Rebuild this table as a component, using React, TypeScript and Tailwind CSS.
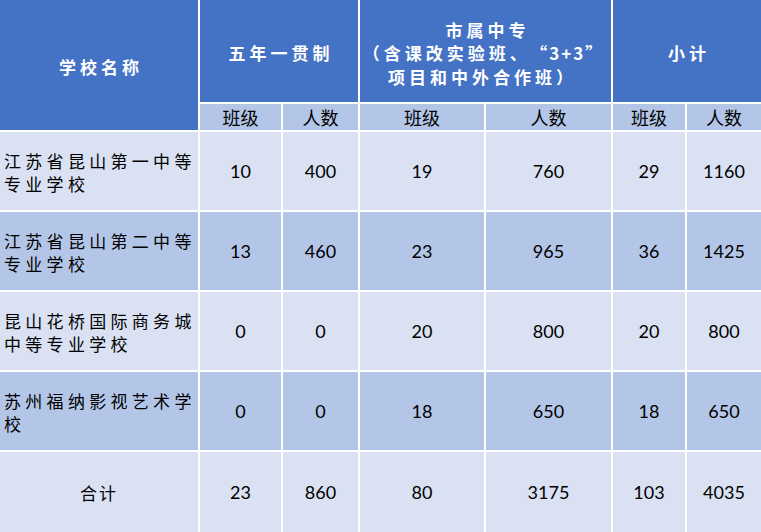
import React from "react";

const rows = [
  { name: ["江苏省昆山第一中等", "专业学校"], cells: ["10", "400", "19", "760", "29", "1160"], dark: false },
  { name: ["江苏省昆山第二中等", "专业学校"], cells: ["13", "460", "23", "965", "36", "1425"], dark: true },
  { name: ["昆山花桥国际商务城", "中等专业学校"], cells: ["0", "0", "20", "800", "20", "800"], dark: false },
  { name: ["苏州福纳影视艺术学", "校"], cells: ["0", "0", "18", "650", "18", "650"], dark: true },
];

const cjk = { fontFamily: '"Noto Sans CJK SC", "Noto Sans", sans-serif' };
const num = { fontFamily: 'Lato, "Noto Sans CJK SC", sans-serif' };

export default function App() {
  return (
    <div className="w-[761px] h-[532px] bg-white">
      <div
        className="grid gap-[2px] bg-white grid-cols-[198px_81px_75px_124px_125px_72px_74px] grid-rows-[102px_26px_78px_78px_78px_78px_80px] text-black"
        style={cjk}
      >
        {/* header */}
        <div className="row-span-2 bg-[#4472c4] flex items-center justify-center text-white font-bold text-[17px] tracking-[4px] pl-[4px] pt-[4px]">
          学校名称
        </div>
        <div className="col-span-2 bg-[#4472c4] flex items-center justify-center text-white font-bold text-[17px] tracking-[4px] pl-[4px] pt-[4px]">
          五年一贯制
        </div>
        <div className="col-span-2 bg-[#4472c4] flex flex-col items-center justify-center text-white font-bold text-[17px] tracking-[4px] leading-[23.5px] text-center pt-[4px]">
          <span className="pl-[4px]">市属中专</span>
          <span className="-ml-[4px]">
            （含课改实验班、
            <span className="tracking-[2px] ml-[8px]">“3+3”</span>
          </span>
          <span className="-ml-[6px]">项目和中外合作班）</span>
        </div>
        <div className="col-span-2 bg-[#4472c4] flex items-center justify-center text-white font-bold text-[17px] tracking-[4px] pl-[4px] pt-[4px]">
          小计
        </div>

        {/* sub header */}
        {["班级", "人数", "班级", "人数", "班级", "人数"].map((t, i) => (
          <div key={i} className="bg-[#b4c6e7] flex items-center justify-center text-[18px] leading-none">
            {t}
          </div>
        ))}

        {/* body */}
        {rows.map((r, i) => {
          const bg = r.dark ? "bg-[#b4c6e7]" : "bg-[#d9e1f2]";
          return (
            <React.Fragment key={i}>
              <div className={`${bg} flex flex-col justify-center pl-[4px] pt-[2px] text-[17px] tracking-[4.3px] leading-[23px]`}>
                <span>{r.name[0]}</span>
                <span>{r.name[1]}</span>
              </div>
              {r.cells.map((c, j) => (
                <div key={j} className={`${bg} flex items-center justify-center text-[18px] pt-[1px]`} style={num}>
                  {c}
                </div>
              ))}
            </React.Fragment>
          );
        })}

        {/* total */}
        <div className="bg-[#d9e1f2] flex items-center justify-center text-[17px] tracking-[2px] pt-[1px]">合计</div>
        {["23", "860", "80", "3175", "103", "4035"].map((c, j) => (
          <div key={j} className="bg-[#d9e1f2] flex items-center justify-center text-[18px] pt-[1px]" style={num}>
            {c}
          </div>
        ))}
      </div>
    </div>
  );
}
